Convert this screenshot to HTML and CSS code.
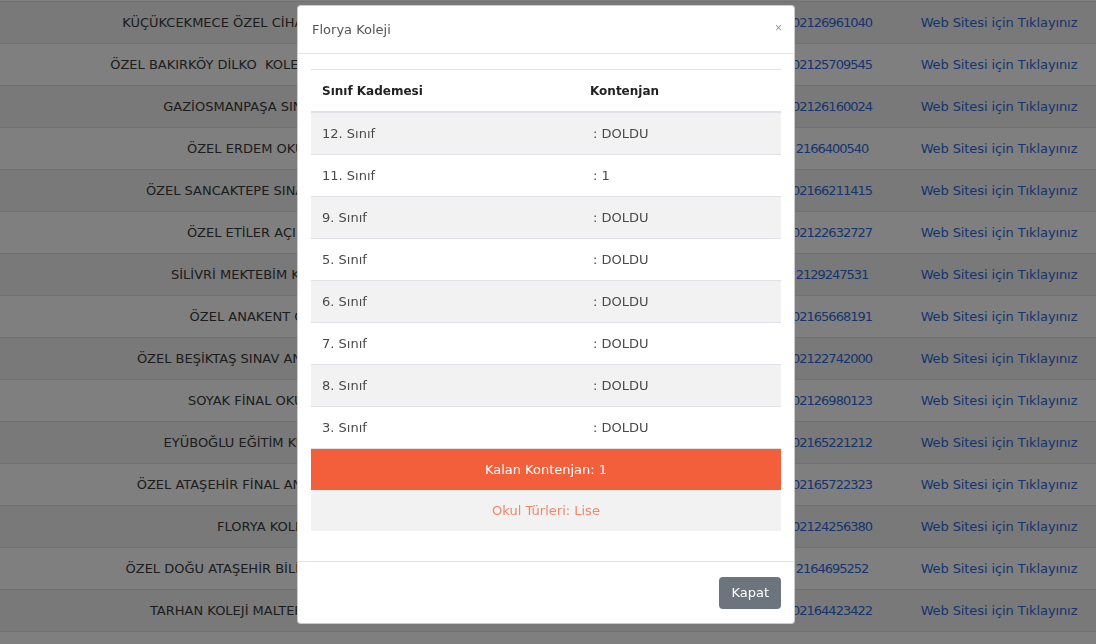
FILE: index.html
```html
<!DOCTYPE html>
<html lang="tr">
<head>
    <meta charset="UTF-8">
    <meta name="viewport" content="width=device-width, initial-scale=1.0">
    <title>Okul Kontenjanları</title>
    <link rel="stylesheet" href="styles.css">
</head>
<body>
    <div class="page">
        <table class="school-list">
            <colgroup>
                <col class="col-name">
                <col class="col-district">
                <col class="col-phone">
                <col class="col-web">
            </colgroup>
            <tbody>
                <tr><td>KÜÇÜKCEKMECE ÖZEL CİHANGİR KOLEJLERİ</td><td>Küçükçekmece</td><td class="phone">02126961040</td><td><a href="#">Web Sitesi için Tıklayınız</a></td></tr>
                <tr><td>ÖZEL BAKIRKÖY DİLKO&nbsp; KOLEJİ ANADOLU LİSESİ</td><td>Bakırköy</td><td class="phone">02125709545</td><td><a href="#">Web Sitesi için Tıklayınız</a></td></tr>
                <tr><td>GAZİOSMANPAŞA SINAV KOLEJİ</td><td>Gaziosmanpaşa</td><td class="phone">02126160024</td><td><a href="#">Web Sitesi için Tıklayınız</a></td></tr>
                <tr><td>ÖZEL ERDEM OKULLARI</td><td>Kartal</td><td class="phone">2166400540</td><td><a href="#">Web Sitesi için Tıklayınız</a></td></tr>
                <tr><td>ÖZEL SANCAKTEPE SINAV KOLEJLERİ</td><td>Sancaktepe</td><td class="phone">02166211415</td><td><a href="#">Web Sitesi için Tıklayınız</a></td></tr>
                <tr><td>ÖZEL ETİLER AÇI KOLEJİ</td><td>Beşiktaş</td><td class="phone">02122632727</td><td><a href="#">Web Sitesi için Tıklayınız</a></td></tr>
                <tr><td>SİLİVRİ MEKTEBİM KOLEJLERİ</td><td>Silivri</td><td class="phone">2129247531</td><td><a href="#">Web Sitesi için Tıklayınız</a></td></tr>
                <tr><td>ÖZEL ANAKENT OKULU</td><td>Esenyurt</td><td class="phone">02165668191</td><td><a href="#">Web Sitesi için Tıklayınız</a></td></tr>
                <tr><td>ÖZEL BEŞİKTAŞ SINAV ANADOLU LİSESİ</td><td>Beşiktaş</td><td class="phone">02122742000</td><td><a href="#">Web Sitesi için Tıklayınız</a></td></tr>
                <tr><td>SOYAK FİNAL OKULLARI</td><td>Başakşehir</td><td class="phone">02126980123</td><td><a href="#">Web Sitesi için Tıklayınız</a></td></tr>
                <tr><td>EYÜBOĞLU EĞİTİM KURUMLARI</td><td>Ümraniye</td><td class="phone">02165221212</td><td><a href="#">Web Sitesi için Tıklayınız</a></td></tr>
                <tr><td>ÖZEL ATAŞEHİR FİNAL ANADOLU LİSESİ</td><td>Ataşehir</td><td class="phone">02165722323</td><td><a href="#">Web Sitesi için Tıklayınız</a></td></tr>
                <tr><td>FLORYA KOLEJİ</td><td>Bakırköy</td><td class="phone">02124256380</td><td><a href="#">Web Sitesi için Tıklayınız</a></td></tr>
                <tr><td>ÖZEL DOĞU ATAŞEHİR BİLİMSEL OKULLARI</td><td>Ataşehir</td><td class="phone">2164695252</td><td><a href="#">Web Sitesi için Tıklayınız</a></td></tr>
                <tr><td>TARHAN KOLEJİ MALTEPE KAMPÜSÜ</td><td>Maltepe</td><td class="phone">02164423422</td><td><a href="#">Web Sitesi için Tıklayınız</a></td></tr>
                <tr><td></td><td></td><td></td><td></td></tr>
            </tbody>
        </table>
    </div>

    <div class="backdrop"></div>

    <div class="modal">
        <div class="modal-header">
            <h5 class="modal-title">Florya Koleji</h5>
            <button class="close" type="button">&times;</button>
        </div>
        <div class="modal-body">
            <table class="quota">
                <thead>
                    <tr><th class="grade">Sınıf Kademesi</th><th>Kontenjan</th></tr>
                </thead>
                <tbody>
                    <tr><td>12. Sınıf</td><td>: DOLDU</td></tr>
                    <tr><td>11. Sınıf</td><td>: 1</td></tr>
                    <tr><td>9. Sınıf</td><td>: DOLDU</td></tr>
                    <tr><td>5. Sınıf</td><td>: DOLDU</td></tr>
                    <tr><td>6. Sınıf</td><td>: DOLDU</td></tr>
                    <tr><td>7. Sınıf</td><td>: DOLDU</td></tr>
                    <tr><td>8. Sınıf</td><td>: DOLDU</td></tr>
                    <tr><td>3. Sınıf</td><td>: DOLDU</td></tr>
                    <tr class="total"><td colspan="2">Kalan Kontenjan: 1</td></tr>
                    <tr class="types"><td colspan="2">Okul Türleri: Lise</td></tr>
                </tbody>
            </table>
        </div>
        <div class="modal-footer">
            <button class="btn-close" type="button">Kapat</button>
        </div>
    </div>
</body>
</html>
```

FILE: styles.css
```css
body {
    margin: 0;
    font-family: "DejaVu Sans", sans-serif;
    font-size: 13px;
    color: #3a3a3a;
    background: #fff;
    overflow: hidden;
}
.page {
    padding-top: 1px;
}
.school-list {
    width: 100%;
    border-collapse: collapse;
    table-layout: fixed;
}
.col-name { width: 528px; }
.col-district { width: 232px; }
.col-phone { width: 144px; }
.col-web { width: 192px; }
.school-list td {
    height: 41px;
    padding: 0 4px;
    border-top: 1px solid #dee2e6;
    text-align: center;
    white-space: nowrap;
    overflow: hidden;
    line-height: 20px;
}
.school-list td.phone {
    letter-spacing: -1px;
    color: #2d6be0;
}
.school-list tr:nth-child(odd) td {
    background: #f2f2f2;
}
.school-list a {
    display: inline-block;
    margin-left: -2px;
    letter-spacing: -0.1px;
    color: #2d6be0;
    text-decoration: none;
}
.backdrop {
    position: fixed;
    inset: 0;
    background: rgba(0, 0, 0, 0.5);
}
.modal {
    position: fixed;
    top: 5px;
    left: 297px;
    width: 498px;
    background: #fff;
    border: 1px solid rgba(0, 0, 0, 0.2);
    border-radius: 4px;
    box-sizing: border-box;
}
.modal-header {
    display: flex;
    align-items: center;
    justify-content: space-between;
    padding: 13px 15px 13px 14px;
    border-bottom: 1px solid #e5e5e5;
}
.modal-title {
    margin: 0;
    font-size: 13px;
    font-weight: normal;
    line-height: 21px;
    color: #555;
}
.close {
    border: none;
    background: none;
    padding: 0;
    margin: -4px -3px 0 0;
    font-size: 12px;
    color: #999;
    line-height: 1;
}
.modal-body {
    padding: 15px 13px 30px 13px;
}
.quota {
    width: 100%;
    border-collapse: collapse;
    table-layout: fixed;
}
.quota .grade {
    width: 246px;
}
.quota th,
.quota td {
    height: 41px;
    padding: 0 11px;
    border-top: 1px solid #dee2e6;
    text-align: left;
    line-height: 20px;
}
.quota th {
    font-size: 12px;
    font-weight: 600;
    color: #222;
    border-bottom: 2px solid #dee2e6;
}
.quota td {
    color: #4a4a4a;
}
.quota td + td {
    padding-left: 14px;
}
.quota tbody tr:nth-child(odd) td {
    background: #f2f2f2;
}
.quota tbody tr.total td {
    background: #f25f3a;
    color: #fff;
    text-align: center;
    border-top: 1px solid #e2e2e2;
}
.quota tbody tr.types td {
    background: #f2f2f2;
    color: #f0876a;
    text-align: center;
    border-top: none;
}
.modal-footer {
    display: flex;
    justify-content: flex-end;
    padding: 15px 13px 14px;
    border-top: 1px solid #e5e5e5;
}
.btn-close {
    font-family: inherit;
    font-size: 13px;
    line-height: 20px;
    padding: 6px 12px;
    color: #fff;
    background: #6c757d;
    border: none;
    border-radius: 4px;
}
```
